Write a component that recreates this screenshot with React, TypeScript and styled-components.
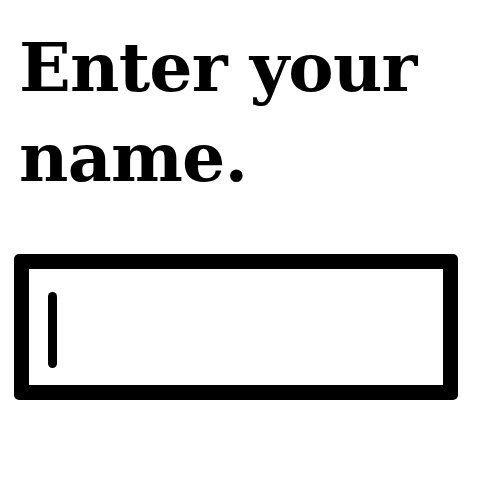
import * as React from 'react';
import styled, { createGlobalStyle } from 'styled-components';

const GlobalStyle = createGlobalStyle`
  html, body {
    margin: 0;
    padding: 0;
    background: #ffffff;
  }
`;

const Page = styled.main`
  width: 500px;
  height: 500px;
  box-sizing: border-box;
  padding: 22px 0 0 14px;
  display: flex;
  flex-direction: column;
`;

const Prompt = styled.h1`
  margin: 0 0 0 5px;
  font-family: 'DejaVu Serif', 'Liberation Serif', serif;
  font-weight: bold;
  font-size: 68px;
  line-height: 90px;
  letter-spacing: -0.8px;
  color: #000;
  width: 440px;
`;

const NameField = styled.div`
  margin-top: 52px;
  width: 444px;
  height: 146px;
  box-sizing: border-box;
  border: 15px solid #000;
  border-radius: 5px;
  padding: 23px 0 0 19px;
  display: flex;
  align-items: flex-start;
`;

const Caret = styled.span`
  display: block;
  width: 9px;
  height: 76px;
  border-radius: 5px;
  background: #000;
`;

export default function App() {
  return (
    <>
      <GlobalStyle />
      <Page>
        <Prompt>Enter your name.</Prompt>
        <NameField>
          <Caret />
        </NameField>
      </Page>
    </>
  );
}
